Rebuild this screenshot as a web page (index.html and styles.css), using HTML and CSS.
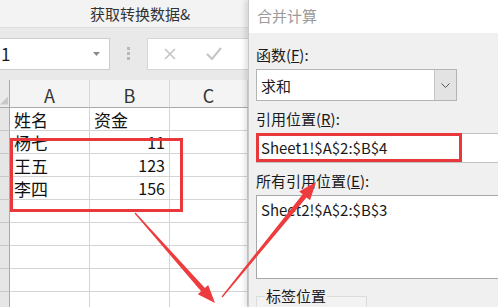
FILE: index.html
```html
<!DOCTYPE html>
<html lang="zh-CN">
<head>
  <meta charset="UTF-8" />
  <title>合并计算</title>
  <link rel="stylesheet" href="styles.css">
</head>
<body>

<div class="screen">
  <div class="excel">
    <div class="ribbon-title">获取转换数据&amp;</div>

    <div class="formula-bar">
      <div class="name-box">
        <span>1</span>
        <svg class="caret" width="7" height="4" viewBox="0 0 7 4"><path d="M0 0h7L3.5 4z" fill="#8a8a8a"/></svg>
      </div>
      <svg class="grip" width="3" height="13" viewBox="0 0 3 13">
        <rect x="0" y="0" width="3" height="3" fill="#b9b9b9"/>
        <rect x="0" y="5" width="3" height="3" fill="#b9b9b9"/>
        <rect x="0" y="10" width="3" height="3" fill="#b9b9b9"/>
      </svg>
      <div class="formula-box">
        <svg width="12" height="12" viewBox="0 0 12 12"><path d="M1 1l10 10M11 1L1 11" stroke="#c4c4c4" stroke-width="1.6"/></svg>
        <svg width="16" height="13" viewBox="0 0 16 13"><path d="M1 7l5 5L15 1" stroke="#c4c4c4" stroke-width="2" fill="none"/></svg>
      </div>
    </div>

    <div class="sheet">
      <div class="corner"><svg width="9" height="9" viewBox="0 0 9 9"><path d="M9 0v9H0z" fill="#c8c8c8"/></svg></div>
      <div class="col-head">A</div>
      <div class="col-head">B</div>
      <div class="col-head">C</div>

      <div class="row-head"></div><div class="cell">姓名</div><div class="cell">资金</div><div class="cell"></div>
      <div class="row-head"></div><div class="cell">杨七</div><div class="cell num">11</div><div class="cell"></div>
      <div class="row-head"></div><div class="cell">王五</div><div class="cell num">123</div><div class="cell"></div>
      <div class="row-head"></div><div class="cell">李四</div><div class="cell num">156</div><div class="cell"></div>
      <div class="row-head"></div><div class="cell"></div><div class="cell"></div><div class="cell"></div>
      <div class="row-head"></div><div class="cell"></div><div class="cell"></div><div class="cell"></div>
      <div class="row-head"></div><div class="cell"></div><div class="cell"></div><div class="cell"></div>
      <div class="row-head"></div><div class="cell"></div><div class="cell"></div><div class="cell"></div>
      <div class="row-head"></div><div class="cell"></div><div class="cell"></div><div class="cell"></div>
    </div>
  </div>

  <div class="dialog">
    <div class="dialog-title">合并计算</div>
    <div class="dialog-body">
      <div class="label">函数(<u>F</u>):</div>
      <div class="select">
        <span class="select-value">求和</span>
        <div class="select-btn">
          <svg width="9" height="5" viewBox="0 0 9 5"><path d="M0.5 0.5l4 4 4-4" stroke="#555" fill="none"/></svg>
        </div>
      </div>

      <div class="label">引用位置(<u>R</u>):</div>
      <div class="ref-input">Sheet1!$A$2:$B$4</div>

      <div class="label">所有引用位置(<u>E</u>):</div>
      <div class="ref-list">Sheet2!$A$2:$B$3</div>

      <div class="group"><span class="group-label">标签位置</span></div>
    </div>
  </div>

  <!-- annotation marks drawn on top of the screenshot -->
  <svg class="marks" width="498" height="307" viewBox="0 0 498 307">
    <rect x="11.5" y="139.5" width="170" height="71" fill="none" stroke="#e8383b" stroke-width="3"/>
    <rect x="257.5" y="134.5" width="203" height="26" fill="none" stroke="#e8383b" stroke-width="3"/>
    <polygon points="135.45,212.6 204.9,287.9 208.2,285 215,303 197.8,294.2 201.1,291.3 134.55,213.4" fill="#ee3b3d"/>
    <polygon points="222.5,297.4 306.5,197.5 310,200.3 316,182 299.2,191.5 302.7,194.3 221.5,296.6" fill="#ee3b3d"/>
  </svg>
</div>

</body>
</html>
```

FILE: styles.css
```css
body {
  margin: 0;
  padding: 0;
  font-family: "Noto Sans CJK SC", "Noto Sans", sans-serif;
  color: #1a1a1a;
}
.screen {
  position: relative;
  width: 498px;
  height: 307px;
  overflow: hidden;
  display: flex;
  background: #fff;
}

/* excel side */
.excel {
  width: 248px;
  flex-shrink: 0;
  display: flex;
  flex-direction: column;
}
.ribbon-title {
  height: 28px;
  line-height: 28px;
  padding-left: 90px;
  font-size: 15px;
  color: #333;
  background: #f3f3f3;
  border-bottom: 1px solid #dedede;
  box-sizing: border-box;
  white-space: nowrap;
}
.formula-bar {
  height: 52px;
  background: #e9e9e9;
  display: flex;
  align-items: center;
  padding-bottom: 1px;
  box-sizing: border-box;
}
.name-box {
  width: 110px;
  height: 32px;
  background: #fff;
  border: 1px solid #cdcdcd;
  border-left: none;
  box-sizing: border-box;
  display: flex;
  align-items: center;
  justify-content: space-between;
  padding: 0 9px 0 1px;
  font-size: 17px;
}
.grip {
  margin: 0 17px 0 17px;
}
.formula-box {
  flex: 1;
  height: 32px;
  background: #fff;
  border: 1px solid #d6d6d6;
  border-right: none;
  box-sizing: border-box;
  display: flex;
  align-items: center;
  gap: 30px;
  padding-left: 16px;
}
.sheet {
  flex: 1;
  display: grid;
  grid-template-columns: 10px 80px 80px 1fr;
  grid-template-rows: 28px repeat(9, 23px);
  overflow: hidden;
}
.corner {
  background: #eaeaea;
  border-right: 1px solid #a9a9a9;
  border-bottom: 1px solid #a9a9a9;
  display: flex;
  align-items: flex-end;
  justify-content: flex-end;
  padding: 0 1px 2px 0;
}
.col-head {
  background: #f4f4f4;
  border-right: 1px solid #d8d8d8;
  border-bottom: 1px solid #a9a9a9;
  text-align: center;
  line-height: 30px;
  font-size: 18px;
  color: #333;
}
.row-head {
  background: #e6e6e6;
  border-right: 1px solid #a9a9a9;
  border-bottom: 1px solid #c9c9c9;
}
.cell {
  border-right: 1px solid #d4d4d4;
  border-bottom: 1px solid #d4d4d4;
  padding: 0 4px;
  font-size: 17px;
  line-height: 23px;
  color: #111;
  white-space: nowrap;
}
.cell.num {
  text-align: right;
  font-size: 16px;
}

/* dialog side */
.dialog {
  flex: 1;
  display: flex;
  flex-direction: column;
  border-left: 1px solid #c9c9c9;
  box-shadow: -3px 0 5px rgba(0, 0, 0, 0.12);
  z-index: 1;
}
.dialog-title {
  height: 33px;
  line-height: 31px;
  padding-left: 8px;
  background: #fff;
  color: #9b9b9b;
  font-size: 15px;
}
.dialog-body {
  flex: 1;
  background: #f0f0f0;
  padding-left: 7px;
  overflow: hidden;
}
.label {
  height: 20px;
  line-height: 20px;
  font-size: 15px;
  margin-top: 8px;
  white-space: nowrap;
}
.label:first-child {
  margin-top: 12px;
}
.select {
  margin-top: 4px;
  width: 201px;
  height: 32px;
  background: #fff;
  border: 1px solid #b4b4b4;
  box-sizing: border-box;
  display: flex;
  align-items: center;
  justify-content: space-between;
}
.select-value {
  padding-left: 4px;
  font-size: 15px;
}
.select-btn {
  width: 21px;
  height: 30px;
  background: #e3e3e3;
  border-left: 1px solid #c4c4c4;
  display: flex;
  align-items: center;
  justify-content: center;
}
.ref-input {
  margin-top: 4px;
  width: 300px;
  height: 30px;
  line-height: 28px;
  background: #fff;
  border: 1px solid #c2c2c2;
  box-sizing: border-box;
  padding-left: 4px;
  font-size: 15px;
  white-space: nowrap;
}
.ref-list {
  margin-top: 4px;
  width: 300px;
  height: 84px;
  background: #fff;
  border: 1px solid #a8a8a8;
  box-sizing: border-box;
  padding: 2px 0 0 4px;
  line-height: 24px;
  font-size: 15px;
  white-space: nowrap;
}
.group {
  margin-top: 17px;
  width: 111px;
  height: 40px;
  border: 1px solid #dcdcdc;
  box-sizing: border-box;
  background: #f3f3f3;
}
.group-label {
  display: inline-block;
  margin: -11px 0 0 8px;
  padding: 0 1px;
  line-height: 20px;
  font-size: 15px;
  background: #f0f0f0;
  vertical-align: top;
}

.marks {
  position: absolute;
  left: 0;
  top: 0;
  z-index: 2;
  pointer-events: none;
}
```
